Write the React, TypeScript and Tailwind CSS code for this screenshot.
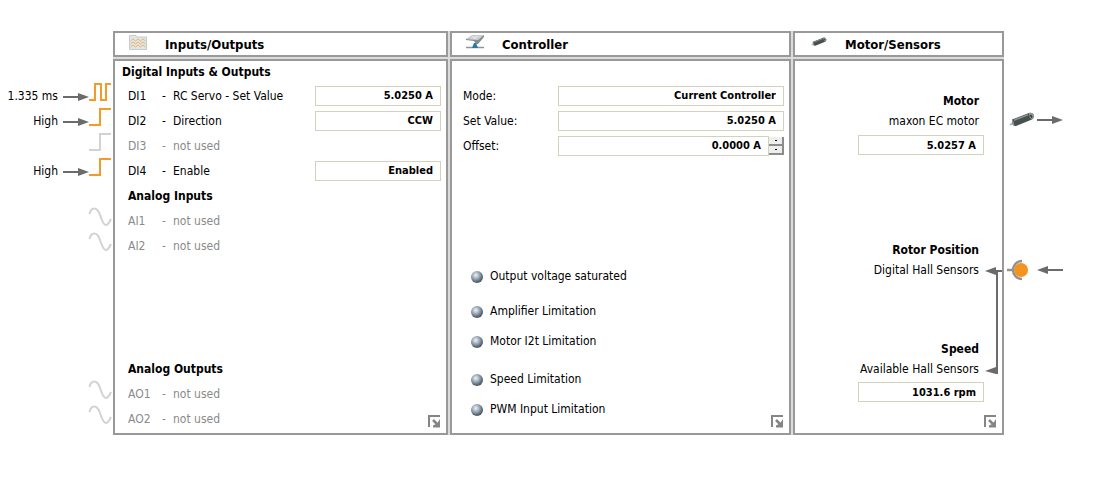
import React, { useState } from "react";

type Channel = { id: string; name: string; value?: string };

const digital: Channel[] = [
  { id: "DI1", name: "RC Servo - Set Value", value: "5.0250 A" },
  { id: "DI2", name: "Direction", value: "CCW" },
  { id: "DI3", name: "not used" },
  { id: "DI4", name: "Enable", value: "Enabled" },
];
const analogIn: Channel[] = [
  { id: "AI1", name: "not used" },
  { id: "AI2", name: "not used" },
];
const analogOut: Channel[] = [
  { id: "AO1", name: "not used" },
  { id: "AO2", name: "not used" },
];

const field =
  "h-5 min-w-0 border border-[#d3d3bd] bg-white pr-[7px] text-right text-[11px] leading-4 font-bold text-black outline-none";

function ChannelRow({ id, name, value }: Channel) {
  const text = (
    <>
      <span className="w-[34px]">{id}</span>
      <span className="w-[11px]">-</span>
      <span>{name}</span>
    </>
  );
  return (
    <div className="flex h-[25px] items-center pr-[5px] pl-[13px]">
      {value ? (
        <>
          <label htmlFor={id} className="flex flex-1">{text}</label>
          <input id={id} readOnly value={value} className={`${field} w-[126px]`} />
        </>
      ) : (
        <p className="flex flex-1 text-[#8a8a8a]">{text}</p>
      )}
    </div>
  );
}

function Arrow({ left = false }: { left?: boolean }) {
  return (
    <svg width="26" height="10" viewBox="0 0 26 10" className="shrink-0" aria-hidden="true">
      {left ? (
        <path d="M26 4H11V1L0 5L11 9V6H26Z" fill="#6b6b6b" />
      ) : (
        <path d="M0 4H15V1L26 5L15 9V6H0Z" fill="#6b6b6b" />
      )}
    </svg>
  );
}

function Signal({ kind, label }: { kind: "pulse" | "step" | "off" | "sine"; label?: string }) {
  return (
    <div className="flex h-[25px] items-center justify-end">
      {label && (
        <>
          <span className="pr-[5px]">{label}</span>
          <span className="flex pt-[2px]"><Arrow /></span>
        </>
      )}
      <svg width="24" height="25" viewBox="0 0 24 25" fill="none" strokeWidth="2" className="shrink-0 overflow-visible" aria-hidden="true">
        {kind === "pulse" && <path d="M0 17H6V1H12V17H17V1H22" stroke="#f39a2b" />}
        {kind === "step" && <path d="M0 17H11V1H22" stroke="#f39a2b" />}
        {kind === "off" && <path d="M0 17H11V1H22" stroke="#d2d2d2" />}
        {kind === "sine" && <path d="M0.500 6C2 -1 8 -2 11 7S17 22 22 11" stroke="#d2d2d2" />}
      </svg>
    </div>
  );
}

function MotorIcon({ className }: { className: string }) {
  return (
    <svg viewBox="0 0 26 16" className={className} aria-hidden="true">
      <path d="M1 13L5 10" stroke="#b9bcbc" strokeWidth="2" />
      <path d="M3 7.500L20 1Q24 0 25 4Q25 6.500 23 7.500L7 14Q4 14.500 3 11Z" fill="#46504f" />
      <path d="M5 8.200L19 2.700" stroke="#87918f" strokeWidth="1.500" />
      <path d="M20 1Q24 0 25 4Q25 6.500 23 7.500Q20 6 20 1Z" fill="#929a99" />
      <path d="M21.500 3L23 5.500" stroke="#313938" strokeWidth="1.500" />
      <path d="M3 7.500Q5 9 5.500 14Q3 13 3 11Z" fill="#8d9493" />
    </svg>
  );
}

function WaveIcon() {
  return (
    <svg width="18" height="15" viewBox="0 0 18 15" fill="none" aria-hidden="true">
      <path d="M0.500 0.500H7L8 2H17.500V14.500H0.500Z" fill="#e0e5e8" stroke="#c3ccd1" />
      <path d="M1.500 6L4 4L6.500 6L9 4L11.500 6L14 4L16.500 6M1.500 9L4 7L6.500 9L9 7L11.500 9L14 7L16.500 9M1.500 12L4 10L6.500 12L9 10L11.500 12L14 10L16.500 12" stroke="#f0b468" />
    </svg>
  );
}

function ControllerIcon() {
  return (
    <svg width="18" height="14" viewBox="0 0 18 14" aria-hidden="true">
      <path d="M0 4L6 0H18L12 5Z" fill="#c7cccd" />
      <path d="M0 4L12 5L18 0V2L12 9H10L8 6L0 5Z" fill="#858c8e" />
      <path d="M4 2L14 1L9 4Z" fill="#e2e5e5" />
      <path d="M0 12.500H18" stroke="#8c969b" strokeWidth="1.500" />
      <path d="M8 8H10L12 13H6Z" fill="#2878aa" />
    </svg>
  );
}

function Expand() {
  return (
    <button type="button" aria-label="Expand" className="absolute right-[5px] bottom-[5px]">
      <svg width="13" height="13" viewBox="0 0 13 13" fill="none" stroke="#858585" strokeWidth="2">
        <path d="M1 12V1H12" />
        <path d="M5 5L10 10" strokeWidth="2.500" />
        <path d="M12 4V12.500H5V10.500L8 9L10 7Z" fill="#858585" stroke="none" />
      </svg>
    </button>
  );
}

function Header({ icon, title }: { icon: React.ReactNode; title: string }) {
  return (
    <header className="flex h-[26px] items-center border-2 border-[#999] bg-white pl-[14px]">
      <span className="flex w-9 shrink-0 pb-1">{icon}</span>
      <h2 className="pt-[2px] text-[13px] leading-4 font-bold">{title}</h2>
    </header>
  );
}

function Led({ label }: { label: string }) {
  return (
    <li className="flex h-5 items-center gap-[6px]">
      <svg width="14" height="14" viewBox="0 0 14 14" aria-hidden="true">
        <defs>
          <radialGradient id="led" cx="0.4" cy="0.35" r="0.6">
            <stop offset="0" stopColor="#edf4f9" />
            <stop offset="0.45" stopColor="#a5b3bf" />
            <stop offset="1" stopColor="#4f5c68" />
          </radialGradient>
        </defs>
        <circle cx="7" cy="8" r="6" fill="url(#led)" />
      </svg>
      {label}
    </li>
  );
}

const body = "relative flex flex-col border-2 border-[#999] bg-white";

export default function App() {
  const [offset, setOffset] = useState(0);
  return (
    <main className="flex min-h-screen items-start bg-white pt-[31px] font-['DejaVu_Sans_Condensed','DejaVu_Sans',sans-serif] text-[12px] leading-4 text-black">
      <aside className="flex w-[113px] shrink-0 flex-col self-stretch pt-[52px]">
        <Signal kind="pulse" label="1.335 ms" />
        <Signal kind="step" label="High" />
        <Signal kind="off" />
        <Signal kind="step" label="High" />
        <div className="h-[25px]" />
        <Signal kind="sine" />
        <Signal kind="sine" />
        <div className="h-[123px]" />
        <Signal kind="sine" />
        <Signal kind="sine" />
      </aside>

      <div className="grid min-w-0 flex-1 grid-cols-[335fr_341fr_211fr] gap-[2px] bg-[#dcdcdc]">
        <Header icon={<WaveIcon />} title="Inputs/Outputs" />
        <Header icon={<ControllerIcon />} title="Controller" />
        <Header icon={<MotorIcon className="ml-[2px] h-[10px] w-4" />} title="Motor/Sensors" />

        <section className={body}>
          <h3 className="flex h-[22px] items-center pl-[7px] font-bold">Digital Inputs &amp; Outputs</h3>
          {digital.map((c) => <ChannelRow key={c.id} {...c} />)}
          <h3 className="flex h-[25px] items-center pl-[13px] font-bold">Analog Inputs</h3>
          {analogIn.map((c) => <ChannelRow key={c.id} {...c} />)}
          <h3 className="mt-[98px] flex h-[25px] items-center pl-[13px] font-bold">Analog Outputs</h3>
          {analogOut.map((c) => <ChannelRow key={c.id} {...c} />)}
          <div className="h-[2px]" />
          <Expand />
        </section>

        <section className={body}>
          <div className="flex flex-col pt-[22px] pr-[5px] pl-[11px]">
            <div className="flex h-[25px] items-center">
              <label htmlFor="mode" className="w-[95px]">Mode:</label>
              <input id="mode" readOnly value="Current Controller" className={`${field} flex-1`} />
            </div>
            <div className="flex h-[25px] items-center">
              <label htmlFor="set" className="w-[95px]">Set Value:</label>
              <input id="set" readOnly value="5.0250 A" className={`${field} flex-1`} />
            </div>
            <div className="flex h-[25px] items-center">
              <label htmlFor="offset" className="w-[95px]">Offset:</label>
              <input id="offset" readOnly value={`${offset.toFixed(4)} A`} className={`${field} flex-1`} />
              <div className="flex w-[15px] flex-col">
                <button type="button" aria-label="Increase offset" onClick={() => setOffset(offset + 0.1)} className="flex h-[9px] items-center justify-center border-r-2 border-b-2 border-[#8c8c8c] bg-[#eee]">
                  <span className="h-px w-[2px] bg-black" />
                </button>
                <button type="button" aria-label="Decrease offset" onClick={() => setOffset(offset - 0.1)} className="flex h-[9px] items-center justify-center border-r-2 border-b-2 border-[#8c8c8c] bg-[#eee]">
                  <span className="h-px w-[2px] bg-black" />
                </button>
              </div>
            </div>
          </div>
          <ul className="flex flex-col pt-[108px] pl-[18px]">
            <Led label="Output voltage saturated" />
            <li className="h-[15px]" aria-hidden="true" />
            <Led label="Amplifier Limitation" />
            <li className="h-[10px]" aria-hidden="true" />
            <Led label="Motor I2t Limitation" />
            <li className="h-[18px]" aria-hidden="true" />
            <Led label="Speed Limitation" />
            <li className="h-[10px]" aria-hidden="true" />
            <Led label="PWM Input Limitation" />
          </ul>
          <Expand />
        </section>

        <section className={body}>
          <div className="flex flex-col items-end pt-[30px] pr-[18px] text-right">
            <h3 className="h-5 pr-[5px] leading-5 font-bold">Motor</h3>
            <label htmlFor="current" className="h-5 pr-[5px] leading-5">maxon EC motor</label>
            <input id="current" readOnly value="5.0257 A" className={`${field} mt-1 w-[126px]`} />
          </div>
          <div className="flex justify-end pt-[85px]">
            <div className="flex flex-col pr-[5px] text-right">
              <h3 className="h-5 leading-5 font-bold">Rotor Position</h3>
              <p className="h-5 leading-5">Digital Hall Sensors</p>
              <h3 className="mt-[59px] h-5 leading-5 font-bold">Speed</h3>
              <label htmlFor="speed" className="h-5 leading-5">Available Hall Sensors</label>
            </div>
            <svg width="18" height="140" viewBox="0 0 18 140" fill="#6b6b6b" className="overflow-visible" aria-hidden="true">
              <path d="M18 30H12V27L1 31L12 35V32H18Z" />
              <path d="M11 31H14V134H12L1 131L12 127V31Z" />
            </svg>
          </div>
          <div className="flex justify-end pt-[2px] pr-[18px]">
            <input id="speed" readOnly value="1031.6 rpm" className={`${field} w-[126px]`} />
          </div>
          <Expand />
        </section>
      </div>

      <aside className="flex w-[97px] shrink-0 flex-col pt-[80px]">
        <div className="flex h-[18px] items-center gap-[2px] pl-[5px]">
          <MotorIcon className="h-4 w-[26px]" />
          <Arrow />
        </div>
        <div className="mt-[130px] flex h-[22px] items-center gap-2 pl-[3px]">
          <svg width="22" height="22" viewBox="0 0 22 22" aria-hidden="true">
            <path d="M0 11H5M15 2A9 9 0 0 0 15 20" fill="none" stroke="#929292" strokeWidth="2.500" />
            <circle cx="14" cy="11" r="7" fill="#f4941f" />
          </svg>
          <Arrow left />
        </div>
      </aside>
    </main>
  );
}
